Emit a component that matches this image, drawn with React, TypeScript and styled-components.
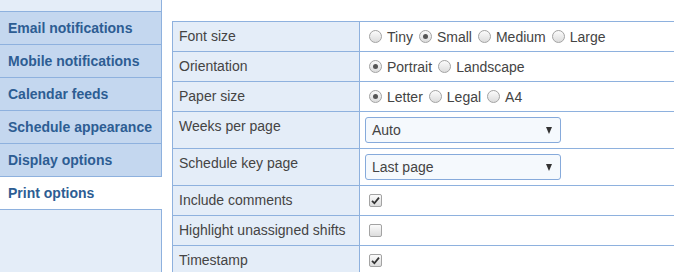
import React from 'react'
import styled, { createGlobalStyle } from 'styled-components'

const GlobalStyle = createGlobalStyle`
  html, body {
    margin: 0;
    padding: 0;
    background: #ffffff;
    font-family: 'Liberation Sans', Arial, sans-serif;
    overflow: hidden;
  }
`

const line = '#8eb1de'

const Page = styled.div`
  display: flex;
  flex-flow: row nowrap;
  height: 272px;
  overflow: hidden;
`

const Sidebar = styled.nav`
  flex: 0 0 161px;
  display: flex;
  flex-direction: column;
  background: #e4edf8;
  border-right: 1px solid ${line};
  padding-top: 11px;
`

const Tab = styled.div<{ $active?: boolean }>`
  height: 32px;
  line-height: 32px;
  padding-left: 8px;
  font-size: 14px;
  font-weight: bold;
  color: #2d5d93;
  white-space: nowrap;
  border-bottom: 1px solid ${line};
  background: ${p => (p.$active ? '#ffffff' : '#c4d7ef')};
  margin-right: ${p => (p.$active ? '-1px' : '0')};
  &:first-child {
    border-top: 1px solid ${line};
  }
`

const Content = styled.main`
  flex: 1 1 auto;
  padding: 21px 0 0 10px;
  overflow: hidden;
`

const Table = styled.table`
  border-collapse: collapse;
  table-layout: fixed;
  width: 540px;
  font-size: 14px;
  color: #444444;

  td {
    border: 1px solid ${line};
    vertical-align: top;
    padding: 0;
  }
`

const Label = styled.td`
  width: 174px;
  background: #e4edf8;
  padding: 6px 6px 0 6px !important;
`

const Value = styled.td<{ $tall?: boolean }>`
  height: ${p => (p.$tall ? 31 : 29)}px;
  background: #ffffff;
  padding: ${p => (p.$tall ? '5px 0 0 5px' : '0 0 0 9px')} !important;
  vertical-align: ${p => (p.$tall ? 'top' : 'middle')} !important;
`

const RadioGroup = styled.div`
  display: flex;
  align-items: center;
  gap: 6px;
`

const RadioItem = styled.label`
  display: flex;
  align-items: center;
  gap: 5px;
`

const RadioCircle = styled.span<{ $checked?: boolean }>`
  position: relative;
  width: 11px;
  height: 11px;
  border-radius: 50%;
  border: 1px solid #a3a3a3;
  background: linear-gradient(#fbfbfb, #dcdcdc);
  box-sizing: content-box;
  &::after {
    content: '';
    display: ${p => (p.$checked ? 'block' : 'none')};
    position: absolute;
    left: 3px;
    top: 3px;
    width: 5px;
    height: 5px;
    border-radius: 50%;
    background: #555555;
  }
`

const Select = styled.div`
  width: 180px;
  height: 24px;
  border: 1px solid #86aadb;
  border-radius: 3px;
  background: #f5f9fd;
  display: flex;
  align-items: center;
  justify-content: space-between;
  padding: 0 8px 0 6px;
  box-sizing: content-box;
  font-size: 14px;
  color: #444444;
`

const Arrow = styled.span`
  width: 0;
  height: 0;
  border-left: 3.5px solid transparent;
  border-right: 3.5px solid transparent;
  border-top: 7px solid #333333;
`

const Check = styled.span`
  display: flex;
  align-items: center;
  justify-content: center;
  width: 11px;
  height: 11px;
  border: 1px solid #a3a3a3;
  border-radius: 2px;
  background: linear-gradient(#fbfbfb, #dcdcdc);
`

const Radios = ({ options, selected }: { options: string[]; selected: string }) => (
  <RadioGroup>
    {options.map(o => (
      <RadioItem key={o}>
        <RadioCircle $checked={o === selected} />
        {o}
      </RadioItem>
    ))}
  </RadioGroup>
)

const Checkbox = ({ checked }: { checked?: boolean }) => (
  <Check>
    {checked && (
      <svg width="9" height="9" viewBox="0 0 9 9">
        <path d="M1 4.8 L3.4 7.2 L8 1.6" fill="none" stroke="#333" strokeWidth="1.8" />
      </svg>
    )}
  </Check>
)

const tabs = [
  'Email notifications',
  'Mobile notifications',
  'Calendar feeds',
  'Schedule appearance',
  'Display options',
  'Print options',
]

const App = (): JSX.Element => (
  <>
    <GlobalStyle />
    <Page>
      <Sidebar>
        {tabs.map(t => (
          <Tab key={t} $active={t === 'Print options'}>
            {t}
          </Tab>
        ))}
      </Sidebar>
      <Content>
        <Table>
          <tbody>
            <tr>
              <Label>Font size</Label>
              <Value>
                <Radios options={['Tiny', 'Small', 'Medium', 'Large']} selected="Small" />
              </Value>
            </tr>
            <tr>
              <Label>Orientation</Label>
              <Value>
                <Radios options={['Portrait', 'Landscape']} selected="Portrait" />
              </Value>
            </tr>
            <tr>
              <Label>Paper size</Label>
              <Value>
                <Radios options={['Letter', 'Legal', 'A4']} selected="Letter" />
              </Value>
            </tr>
            <tr>
              <Label>Weeks per page</Label>
              <Value $tall>
                <Select>
                  Auto
                  <Arrow />
                </Select>
              </Value>
            </tr>
            <tr>
              <Label>Schedule key page</Label>
              <Value $tall>
                <Select>
                  Last page
                  <Arrow />
                </Select>
              </Value>
            </tr>
            <tr>
              <Label>Include comments</Label>
              <Value>
                <Checkbox checked />
              </Value>
            </tr>
            <tr>
              <Label>Highlight unassigned shifts</Label>
              <Value>
                <Checkbox />
              </Value>
            </tr>
            <tr>
              <Label>Timestamp</Label>
              <Value>
                <Checkbox checked />
              </Value>
            </tr>
          </tbody>
        </Table>
      </Content>
    </Page>
  </>
)

export default App
